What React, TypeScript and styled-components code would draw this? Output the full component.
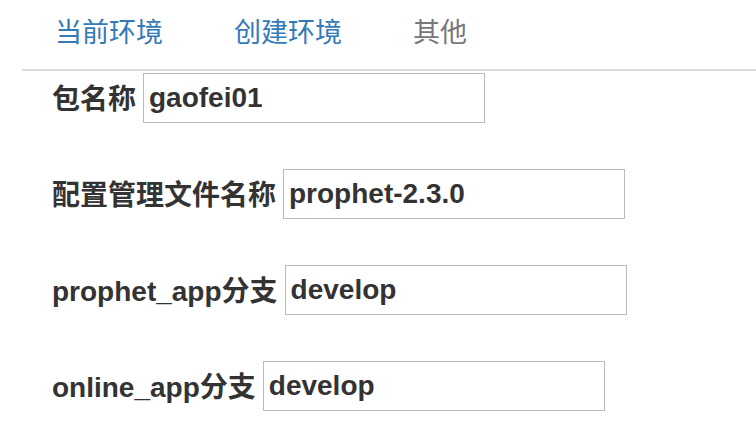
import React from "react";
import styled, { createGlobalStyle } from "styled-components";

const GlobalStyle = createGlobalStyle`
  html, body {
    margin: 0;
    padding: 0;
    background: #fff;
  }
  body {
    font-family: "Liberation Sans", "Noto Sans CJK SC", sans-serif;
    color: #333;
  }
`;

interface TabItem {
  title: string;
  muted?: boolean;
}

interface FieldItem {
  label: string;
  value: string;
}

const tabs: TabItem[] = [
  { title: "当前环境" },
  { title: "创建环境" },
  { title: "其他", muted: true },
];

const fields: FieldItem[] = [
  { label: "包名称", value: "gaofei01" },
  { label: "配置管理文件名称", value: "prophet-2.3.0" },
  { label: "prophet_app分支", value: "develop" },
  { label: "online_app分支", value: "develop" },
];

function App() {
  return (
    <Page>
      <GlobalStyle />
      <NavTabs>
        {tabs.map((tab) => (
          <Tab key={tab.title} muted={tab.muted}>
            {tab.title}
          </Tab>
        ))}
      </NavTabs>
      <Form>
        {fields.map((field) => (
          <FieldRow key={field.label}>
            <Label>{field.label}</Label>
            <TextInput type="text" defaultValue={field.value} />
          </FieldRow>
        ))}
      </Form>
    </Page>
  );
}

export default App;

const Page = styled.div`
  width: 756px;
  height: 444px;
  overflow: hidden;
  box-sizing: border-box;
`;

const NavTabs = styled.div`
  display: flex;
  margin-left: 22px;
  height: 69px;
  border-bottom: 2px solid #ddd;
`;

const Tab = styled.div<{ muted?: boolean }>`
  display: flex;
  align-items: center;
  padding: 0 38px 9px 33px;
  font-size: 27px;
  color: ${(props) => (props.muted ? "#777" : "#337ab7")};
  cursor: pointer;
`;

const Form = styled.div`
  display: flex;
  flex-direction: column;
  gap: 46px;
  padding: 2px 0 0 52px;
`;

const FieldRow = styled.div`
  display: flex;
  align-items: center;
  gap: 7px;
`;

const Label = styled.label`
  font-size: 28px;
  font-weight: 700;
  color: #333;
  white-space: nowrap;
  padding-bottom: 2px;
`;

const TextInput = styled.input`
  width: 342px;
  height: 50px;
  box-sizing: border-box;
  border: 1px solid #bbb;
  border-radius: 0;
  padding: 0 5px;
  font-family: "Liberation Sans", "Noto Sans CJK SC", sans-serif;
  font-size: 28px;
  font-weight: 700;
  color: #333;
  outline: none;
  background: #fff;
`;
